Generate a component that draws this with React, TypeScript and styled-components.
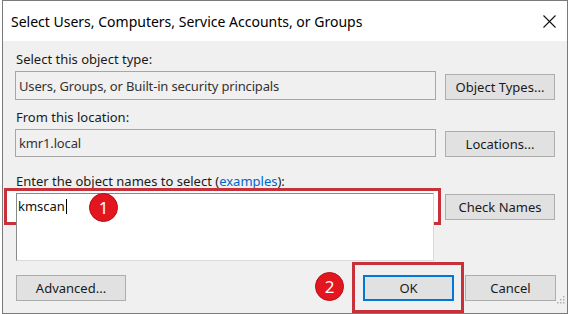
import React from 'react';
import styled, { createGlobalStyle } from 'styled-components';

const GlobalStyle = createGlobalStyle`
  html, body {
    margin: 0;
    padding: 0;
    background: #ffffff;
  }
  body {
    font-family: 'Noto Sans', 'Open Sans', sans-serif;
    font-size: 13px;
    color: #1a1a1a;
  }
`;

const Window = styled.div`
  position: relative;
  box-sizing: border-box;
  margin-left: 2px;
  width: 566px;
  height: 314px;
  border: 1px solid #7a7a7a;
  background: #f0f0f0;
  display: flex;
  flex-direction: column;
  overflow: hidden;
`;

const TitleBar = styled.div`
  height: 40px;
  flex: none;
  background: #ffffff;
  display: flex;
  align-items: center;
  justify-content: space-between;
  padding: 0 11px 0 8px;
`;

const Title = styled.span`
  font-size: 14px;
  color: #000000;
`;

const CloseIcon = styled.svg`
  width: 13px;
  height: 13px;
  display: block;
`;

const Body = styled.div`
  padding: 10px 11px 0 12px;
  display: flex;
  flex-direction: column;
`;

const Section = styled.div<{ $top: number }>`
  margin-top: ${(p) => p.$top}px;
`;

const Label = styled.div`
  line-height: 16px;
  padding-left: 1px;
  margin-bottom: 4px;
`;

const Link = styled.span`
  color: #0066cc;
`;

const Row = styled.div<{ $align: string }>`
  display: grid;
  grid-template-columns: 421px 110px;
  column-gap: 9px;
  align-items: ${(p) => p.$align};
`;

const ReadOnlyField = styled.div<{ $h: number }>`
  box-sizing: border-box;
  height: ${(p) => p.$h}px;
  border: 1px solid #a6a6a6;
  background: #f0f0f0;
  padding: 0 3px;
  display: flex;
  align-items: center;
  color: #333333;
  letter-spacing: -0.15px;
`;

const NamesWrap = styled.div`
  position: relative;
  margin: 0 2px 0 1px;
`;

const NamesField = styled.div`
  position: relative;
  z-index: 1;
  box-sizing: border-box;
  height: 68px;
  border-top: 1px solid #8a8a8a;
  border-left: 1px solid #8a8a8a;
  border-right: 1px solid #dadada;
  border-bottom: 1px solid #dadada;
  background: #ffffff;
  padding: 4px 1px;
  line-height: 16px;
  color: #111111;
`;

const Caret = styled.span`
  display: inline-block;
  width: 1px;
  height: 15px;
  background: #000000;
  vertical-align: -3px;
  margin-left: 1px;
`;

const Highlight = styled.div<{ $l: number; $t: number; $w: number; $h: number }>`
  position: absolute;
  box-sizing: border-box;
  left: ${(p) => p.$l}px;
  top: ${(p) => p.$t}px;
  width: ${(p) => p.$w}px;
  height: ${(p) => p.$h}px;
  border: 3px solid #c8303a;
`;

const NamesHighlight = styled(Highlight)`
  z-index: 0;
  background: #ffffff;
`;

const Badge = styled.div<{ $l: number; $t: number }>`
  position: absolute;
  z-index: 2;
  left: ${(p) => p.$l}px;
  top: ${(p) => p.$t}px;
  width: 29px;
  height: 29px;
  box-sizing: border-box;
  border-radius: 50%;
  background: #e3151e;
  border: 1px solid #b50f16;
  color: #ffffff;
  font-size: 17px;
  line-height: 27px;
  text-align: center;
`;

const Button = styled.button<{ $w: number; $primary?: boolean }>`
  box-sizing: border-box;
  width: ${(p) => p.$w}px;
  height: 26px;
  margin: 0;
  padding: 0;
  font-family: inherit;
  font-size: 13px;
  color: #1a1a1a;
  background: #e1e1e1;
  border: ${(p) => (p.$primary ? '2px solid #0078d7' : '1px solid #adadad')};
`;

const Footer = styled.div`
  margin-top: 14px;
  padding-left: 1px;
  display: flex;
  justify-content: space-between;
  align-items: center;
`;

const FooterRight = styled.div`
  display: flex;
  gap: 11px;
`;

const OkWrap = styled.div`
  position: relative;
`;

const Grip = styled.svg`
  position: absolute;
  right: 2px;
  bottom: 9px;
  width: 8px;
  height: 8px;
`;

export default function App() {
  return (
    <>
      <GlobalStyle />
      <Window>
        <TitleBar>
          <Title>Select Users, Computers, Service Accounts, or Groups</Title>
          <CloseIcon viewBox="0 0 13 13">
            <path d="M0.5 0.5 L12.5 12.5 M12.5 0.5 L0.5 12.5" stroke="#111" strokeWidth="1.1" fill="none" />
          </CloseIcon>
        </TitleBar>
        <Body>
          <Section $top={0}>
            <Label>Select this object type:</Label>
            <Row $align="end">
              <ReadOnlyField $h={29}>Users, Groups, or Built-in security principals</ReadOnlyField>
              <Button $w={110}>Object Types...</Button>
            </Row>
          </Section>
          <Section $top={9}>
            <Label>From this location:</Label>
            <Row $align="end">
              <ReadOnlyField $h={28}>kmr1.local</ReadOnlyField>
              <Button $w={110}>Locations...</Button>
            </Row>
          </Section>
          <Section $top={16}>
            <Label>
              Enter the object names to select (<Link>examples</Link>):
            </Label>
            <Row $align="start">
              <NamesWrap>
                <NamesHighlight $l={-12} $t={-5} $w={437} $h={37} />
                <NamesField>
                  kmscan
                  <Caret />
                </NamesField>
                <Badge $l={73} $t={0}>1</Badge>
              </NamesWrap>
              <Button $w={110} style={{ marginTop: 1 }}>
                Check Names
              </Button>
            </Row>
          </Section>
          <Footer>
            <Button $w={110}>Advanced...</Button>
            <FooterRight>
              <OkWrap>
                <Highlight $l={-11} $t={-13} $w={112} $h={51} />
                <Badge $l={-48} $t={-3}>2</Badge>
                <Button $w={91} $primary>
                  OK
                </Button>
              </OkWrap>
              <Button $w={91}>Cancel</Button>
            </FooterRight>
          </Footer>
        </Body>
        <Grip viewBox="0 0 8 8">
          <rect x="6" y="0" width="1.5" height="1.5" fill="#b0b0b0" />
          <rect x="3" y="3" width="1.5" height="1.5" fill="#b0b0b0" />
          <rect x="6" y="3" width="1.5" height="1.5" fill="#b0b0b0" />
          <rect x="0" y="6" width="1.5" height="1.5" fill="#b0b0b0" />
          <rect x="3" y="6" width="1.5" height="1.5" fill="#b0b0b0" />
          <rect x="6" y="6" width="1.5" height="1.5" fill="#b0b0b0" />
        </Grip>
      </Window>
    </>
  );
}
